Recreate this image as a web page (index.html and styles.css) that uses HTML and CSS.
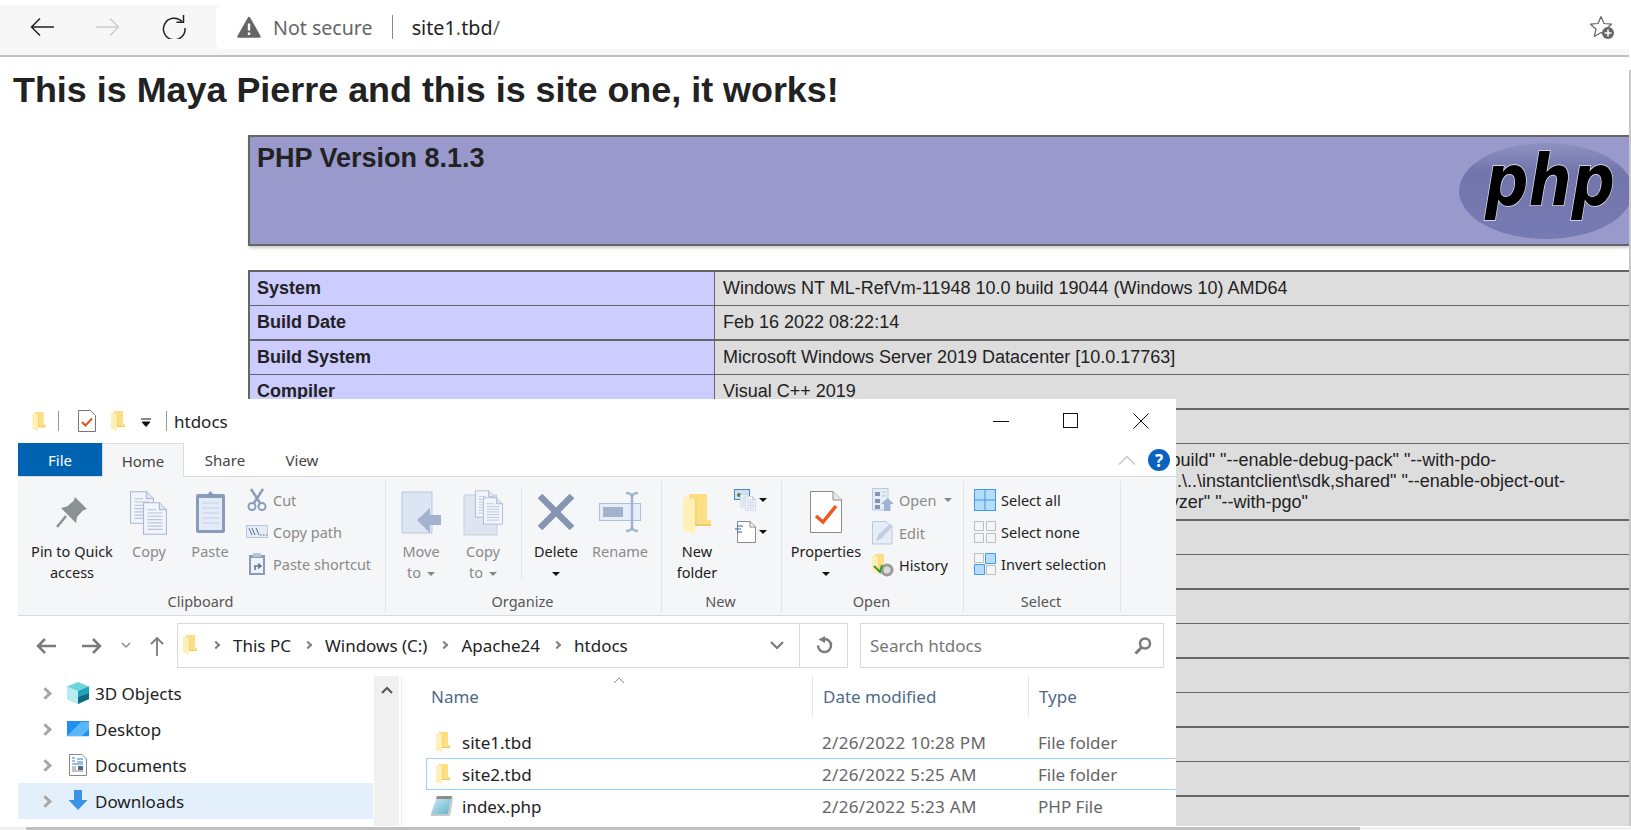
FILE: index.html
```html
<!DOCTYPE html>
<html lang="en">
<head>
    <meta charset="UTF-8">
    <title>site1.tbd</title>
    <link rel="stylesheet" href="styles.css">
</head>
<body>

<svg class="defs" width="0" height="0">
    <defs>
        <linearGradient id="noteFill" x1="0" y1="0" x2="1" y2="1">
            <stop offset="0" stop-color="#d8eef4"/>
            <stop offset="1" stop-color="#5fb0c8"/>
        </linearGradient>
    </defs>
    <symbol id="folder" viewBox="0 0 14 20">
        <path d="M3 0H12V13H14V16H3z" fill="#fcdf85"/>
        <path d="M0 1L6 3V20L0 18z" fill="#fff0b8"/>
        <path d="M6 3V16H7V3z" fill="#f7d575"/>
        <path d="M6 15H14V16H6z" fill="#f2cb62"/>
    </symbol>
    <symbol id="sheet" viewBox="0 0 22 30">
        <path d="M.5.5H15L21.500 7V29.500H.5z" fill="#f2f5fb" stroke="#a9b7d1"/>
        <path d="M15 .5V7H21.500" fill="#dfe5f0" stroke="#a9b7d1"/>
        <path d="M4 7H12M4 10H18M4 13H18M4 16H18M4 19H18M4 22H18M4 25H18" stroke="#b9c4d9"/>
    </symbol>
</svg>

<!-- browser toolbar -->
<div class="toolbar">
    <div class="nav-btns">
        <svg width="24" height="20" viewBox="0 0 24 20"><path d="M1 10H24M10 1.500L1.500 10l8.500 8.500" fill="none" stroke="#222" stroke-width="1.500"/></svg>
        <svg width="24" height="20" viewBox="0 0 24 20"><path d="M0 10H23M14 1.500L22.500 10 14 18.500" fill="none" stroke="#ccc" stroke-width="1.500"/></svg>
        <svg width="24" height="24" viewBox="0 0 24 24"><path d="M20 6.500A10.800 10.800 0 1 0 23 13" fill="none" stroke="#222" stroke-width="1.500"/><path d="M21.500 0V7.200H14.500" fill="none" stroke="#222" stroke-width="1.500"/></svg>
    </div>
    <div class="address">
        <svg class="warn" width="24" height="22" viewBox="0 0 24 22"><path d="M12 2L22.500 20.500H1.500z" fill="#666" stroke="#666" stroke-width="2.500" stroke-linejoin="round"/><path d="M12 7.500V14.500M12 16.500V19" stroke="#fff" stroke-width="2.400"/></svg>
        <span class="not-secure">Not secure</span>
        <span class="addr-sep"></span>
        <span class="url">site1<span class="url-dim">.</span>tbd<span class="url-dim">/</span></span>
        <svg class="star" width="26" height="24" viewBox="0 0 26 24"><path d="M12 1.500L15 8.500L22.500 9.200L17 14L18.700 21.500L12 17.500L5.300 21.500L7 14L1.500 9.200L9 8.500z" fill="none" stroke="#666" stroke-width="1.200" stroke-linejoin="round"/><circle cx="19" cy="18" r="6" fill="#666"/><path d="M15.500 18H22.500M19 14.500V21.500" stroke="#fff" stroke-width="1.600"/></svg>
    </div>
</div>

<h1 class="page-title">This is Maya Pierre and this is site one, it works!</h1>

<!-- phpinfo output -->
<div class="info">
    <div class="info-head">
        <h2>PHP Version 8.1.3</h2>
        <svg class="php-logo" width="176" height="98" viewBox="0 0 176 98">
            <defs>
                <linearGradient id="logoFill" x1="0" y1="0" x2="0" y2="1">
                    <stop offset="0" stop-color="#8e92c2"/>
                    <stop offset="0.3" stop-color="#7175ab"/>
                    <stop offset="1" stop-color="#777bb3"/>
                </linearGradient>
            </defs>
            <ellipse cx="88" cy="49" rx="87" ry="48" fill="url(#logoFill)"/>
            <text class="php-word" x="27" y="63" textLength="130" lengthAdjust="spacingAndGlyphs">php</text>
        </svg>
    </div>

    <table class="info-table">
        <tr><td class="e">System</td><td class="v">Windows NT ML-RefVm-11948 10.0 build 19044 (Windows 10) AMD64</td></tr>
        <tr><td class="e">Build Date</td><td class="v">Feb 16 2022 08:22:14</td></tr>
        <tr><td class="e">Build System</td><td class="v">Microsoft Windows Server 2019 Datacenter [10.0.17763]</td></tr>
        <tr><td class="e">Compiler</td><td class="v">Visual C++ 2019</td></tr>
        <tr><td class="e"></td><td class="v"></td></tr>
        <tr class="tall"><td class="e"></td><td class="v cmd">cscript /nologo /e:jscript configure.js "--enable-snapshot-build" "--enable-debug-pack" "--with-pdo-<br>oci=..\..\..\..\instantclient\sdk,shared" "--with-oci8-19=..\..\..\..\instantclient\sdk,shared" "--enable-object-out-<br>dir=..\obj\" "--enable-com-dotnet=shared" "--without-analyzer" "--with-pgo"</td></tr>
        <tr><td class="e"></td><td class="v"></td></tr>
        <tr><td class="e"></td><td class="v"></td></tr>
        <tr><td class="e"></td><td class="v"></td></tr>
        <tr><td class="e"></td><td class="v"></td></tr>
        <tr><td class="e"></td><td class="v"></td></tr>
        <tr><td class="e"></td><td class="v"></td></tr>
        <tr><td class="e"></td><td class="v"></td></tr>
        <tr><td class="e"></td><td class="v"></td></tr>
        <tr><td class="e"></td><td class="v"></td></tr>
    </table>
</div>

<!-- File Explorer window on top of the page -->
<div class="explorer">
    <div class="titlebar">
        <svg class="tb-folder" width="14" height="19"><use href="#folder"/></svg>
        <span class="tb-sep"></span>
        <svg class="tb-props" width="18" height="22" viewBox="0 0 18 22"><path d="M.5.5H12.500L17.500 5.500V21.500H.5z" fill="#fff" stroke="#777"/><path d="M4 12L7.500 15.500L14 8.500" fill="none" stroke="#e8541e" stroke-width="2"/></svg>
        <svg class="tb-folder2" width="14" height="20"><use href="#folder"/></svg>
        <svg class="tb-drop" width="10" height="10" viewBox="0 0 10 10"><path d="M0 1H10M1 4H9L5 8.500z" stroke="#111" fill="#111"/></svg>
        <span class="tb-sep tb-sep2"></span>
        <span class="win-title">htdocs</span>
        <div class="win-btns">
            <svg width="16" height="16" viewBox="0 0 16 16"><path d="M0 8.500H16" stroke="#111"/></svg>
            <svg width="16" height="16" viewBox="0 0 16 16"><rect x=".5" y=".5" width="14" height="14" fill="none" stroke="#111"/></svg>
            <svg width="16" height="16" viewBox="0 0 16 16"><path d="M.5.5L15.500 15.500M15.500.5L.5 15.500" stroke="#111"/></svg>
        </div>
    </div>

    <div class="tabs">
        <span class="tab file-tab">File</span>
        <span class="tab home-tab">Home</span>
        <span class="tab share-tab">Share</span>
        <span class="tab view-tab">View</span>
        <svg class="collapse" width="18" height="10" viewBox="0 0 18 10"><path d="M1 9.500L9 1.500L17 9.500" fill="none" stroke="#c8c8c8" stroke-width="1.500"/></svg>
        <span class="help">?</span>
    </div>

    <div class="ribbon">
        <section class="group clipboard">
            <div class="group-body">
                <div class="big pin-btn">
                    <div class="big-icon"><svg width="32" height="32" viewBox="0 0 32 32"><path d="M19 1L31 13L27 14.500L21 21L20 27L5 12L11 10.500L17.500 5z" fill="#8b9296"/><path d="M10 20L1 31" stroke="#8b9296" stroke-width="2.500"/></svg></div>
                    <span class="on">Pin to Quick<br>access</span>
                </div>
                <div class="big copy-btn">
                    <div class="big-icon"><svg width="38" height="44" viewBox="0 0 38 44"><use href="#sheet" width="24" height="33" x="0" y="0"/><use href="#sheet" width="24" height="33" x="13" y="11"/></svg></div>
                    <span>Copy</span>
                </div>
                <div class="big paste-btn">
                    <div class="big-icon"><svg width="31" height="44" viewBox="0 0 31 44"><rect x="1" y="4" width="29" height="39" rx="2" fill="#8b9cba"/><rect x="4" y="8" width="23" height="32" fill="#e3ebf7"/><path d="M7 13H24M7 18H24M7 23H24M7 28H24M7 33H24" stroke="#c5d0e3"/><path d="M10 7L15.500 1L21 7z" fill="#8b9cba"/></svg></div>
                    <span>Paste</span>
                </div>
                <div class="small-list">
                    <div class="small"><svg width="20" height="24" viewBox="0 0 20 24"><path d="M4 1L13 15M16 1L7 15" stroke="#8b9cba" stroke-width="2.500"/><circle cx="5" cy="18.500" r="3.500" fill="none" stroke="#8b9cba" stroke-width="2"/><circle cx="15" cy="18.500" r="3.500" fill="none" stroke="#8b9cba" stroke-width="2"/></svg><span>Cut</span></div>
                    <div class="small"><svg width="22" height="14" viewBox="0 0 22 14"><rect x=".5" y=".5" width="21" height="12" fill="#e3ebf7" stroke="#b9c4d9"/><path d="M3 3L6 10M6 3L9 10M10 3L13 10" stroke="#5d6e8e"/><path d="M14 10H15.500M17 10H18.500M20 10H21" stroke="#5d6e8e"/></svg><span>Copy path</span></div>
                    <div class="small"><svg width="20" height="24" viewBox="0 0 20 24"><rect x="2" y="3" width="16" height="20" fill="#8b9cba"/><rect x="4" y="6" width="12" height="15" fill="#eef2f9"/><path d="M6 1H14V5H6z" fill="#b9c4d9"/><path d="M8 18V14H13M11 11.500L14 14L11 16.500" fill="none" stroke="#5d6e8e" stroke-width="1.500"/></svg><span>Paste shortcut</span></div>
                </div>
            </div>
            <div class="group-label">Clipboard</div>
        </section>

        <section class="group organize">
            <div class="group-body">
                <div class="big move-btn">
                    <div class="big-icon"><svg width="40" height="44" viewBox="0 0 40 44"><path d="M1 1H31V42H1z" fill="#dbe5f3" stroke="#b9c8de"/><path d="M16 32L29 20V27H40V37H29V45z" transform="translate(0 -3)" fill="#a3b3cf"/></svg></div>
                    <span>Move<br>to<i class="caret dim"></i></span>
                </div>
                <div class="big copyto-btn">
                    <div class="big-icon"><svg width="41" height="46" viewBox="0 0 41 46"><path d="M1 5H34V45H1z" fill="#dee5f0" stroke="#c3cfe0"/><use href="#sheet" width="20" height="28" x="12" y="0"/><use href="#sheet" width="20" height="30" x="20" y="6"/></svg></div>
                    <span>Copy<br>to<i class="caret dim"></i></span>
                </div>
                <span class="inner-sep"></span>
                <div class="big delete-btn">
                    <div class="big-icon"><svg width="38" height="38" viewBox="0 0 38 38"><path d="M3 3L35 35M35 3L3 35" stroke="#8595b2" stroke-width="6.500"/></svg></div>
                    <span class="on">Delete<br><i class="caret dark"></i></span>
                </div>
                <div class="big rename-btn">
                    <div class="big-icon"><svg width="42" height="42" viewBox="0 0 42 42"><rect x=".5" y="11.500" width="41" height="17" fill="#e6edf8" stroke="#b0bfd8"/><rect x="4" y="15" width="20" height="10" fill="#a3b3cf"/><path d="M27 1C31 1 33 2 33 6V34C33 38 31 39 27 39M39 1C35 1 33 2 33 6M39 39C35 39 33 38 33 34" fill="none" stroke="#a3b3cf" stroke-width="2.500"/></svg></div>
                    <span>Rename</span>
                </div>
            </div>
            <div class="group-label">Organize</div>
        </section>

        <section class="group new-group">
            <div class="group-body">
                <div class="big newfolder-btn">
                    <div class="big-icon"><svg width="28" height="42"><use href="#folder"/></svg></div>
                    <span class="on">New<br>folder</span>
                </div>
                <div class="stack">
                    <div class="stack-row">
                        <svg width="22" height="22" viewBox="0 0 22 22"><rect x=".5" y=".5" width="15" height="10" fill="#cfe3f5" stroke="#4b86bd"/><circle cx="5" cy="6" r="2" fill="#6d7a45"/><use href="#sheet" width="10" height="14" x="6" y="5"/><use href="#sheet" width="11" height="15" x="11" y="7"/></svg>
                        <i class="caret dark"></i>
                    </div>
                    <div class="stack-row">
                        <svg width="22" height="22" viewBox="0 0 22 22"><path d="M3.500.5H16L21.500 6V21.500H3.500z" fill="#fff" stroke="#8c8c8c"/><path d="M16 .5V6H21.500" fill="none" stroke="#8c8c8c"/><path d="M3 5H9M1 8H7M3 11H8" stroke="#2a62a5"/></svg>
                        <i class="caret dark"></i>
                    </div>
                </div>
            </div>
            <div class="group-label">New</div>
        </section>

        <section class="group open-group">
            <div class="group-body">
                <div class="big props-btn">
                    <div class="big-icon"><svg width="32" height="42" viewBox="0 0 32 42"><path d="M.5.5H23L31.500 9V41.500H.5z" fill="#fff" stroke="#8c8c8c"/><path d="M23 .5V9H31.500" fill="#e8e8e8" stroke="#8c8c8c"/><path d="M6 25L13 31L26 15" fill="none" stroke="#ea5a1c" stroke-width="3.500"/></svg></div>
                    <span class="on">Properties<br><i class="caret dark"></i></span>
                </div>
                <div class="small-list open-list">
                    <div class="small"><svg width="22" height="24" viewBox="0 0 22 24"><path d="M.5.5H16V22H.5z" fill="#e6edf8" stroke="#b9c8de"/><path d="M3 4H8V8H3zM3 11H8V15H3zM3 17H8V21H3z" fill="#8595b2"/><path d="M10 4H14M10 8H14" stroke="#b9c8de"/><path d="M9 16L15.500 10L22 16H18.500V23H12V16z" fill="#a3b3cf"/></svg><span>Open</span><i class="caret dim"></i></div>
                    <div class="small"><svg width="22" height="24" viewBox="0 0 22 24"><path d="M.5.5H14L20 6V23H.5z" fill="#e6edf8" stroke="#b9c8de"/><path d="M4 20L6 14L18 3L21 5L9 18z" fill="#c3cfe0"/></svg><span>Edit</span></div>
                    <div class="small on"><svg width="22" height="24" viewBox="0 0 22 24"><use href="#folder" width="14" height="22"/><circle cx="15" cy="17" r="6.500" fill="#9a9a9a"/><circle cx="15" cy="17" r="3.500" fill="#dcdcdc"/><path d="M2 13L8 19L10 12" fill="none" stroke="#3b9a35" stroke-width="2"/></svg><span>History</span></div>
                </div>
            </div>
            <div class="group-label">Open</div>
        </section>

        <section class="group select-group">
            <div class="group-body">
                <div class="small-list select-list">
                    <div class="small on"><svg width="22" height="22" viewBox="0 0 22 22"><rect x=".5" y=".5" width="21" height="21" fill="#b4dcfb" stroke="#3d9be9"/><path d="M11 0V22M0 11H22" stroke="#3d9be9"/></svg><span>Select all</span></div>
                    <div class="small on"><svg width="22" height="22" viewBox="0 0 22 22"><path d="M.5.5H9.500V9.500H.5zM12.500.5H21.500V9.500H12.500zM.5 12.500H9.500V21.500H.5zM12.500 12.500H21.500V21.500H12.500z" fill="none" stroke="#bdbdbd"/></svg><span>Select none</span></div>
                    <div class="small on"><svg width="22" height="22" viewBox="0 0 22 22"><path d="M.5.5H9.500V9.500H.5zM12.500 12.500H21.500V21.500H12.500z" fill="none" stroke="#bdbdbd"/><path d="M11.500.5H21.500V10.500H11.500zM.5 11.500H10.500V21.500H.5z" fill="#b4dcfb" stroke="#3d9be9"/></svg><span>Invert selection</span></div>
                </div>
            </div>
            <div class="group-label">Select</div>
        </section>
    </div>

    <div class="addr-row">
        <svg class="arrow" width="20" height="16" viewBox="0 0 20 16"><path d="M20 8H2M9 1L2 8L9 15" fill="none" stroke="#7b7b7b" stroke-width="2.500"/></svg>
        <svg class="arrow arrow-fwd" width="20" height="16" viewBox="0 0 20 16"><path d="M0 8H18M11 1L18 8L11 15" fill="none" stroke="#7b7b7b" stroke-width="2.500"/></svg>
        <svg class="arrow-down" width="10" height="7" viewBox="0 0 10 7"><path d="M1 1L5 5L9 1" fill="none" stroke="#8c8c8c" stroke-width="1.500"/></svg>
        <svg class="arrow-up" width="14" height="20" viewBox="0 0 14 20"><path d="M7 20V2M1 8L7 2L13 8" fill="none" stroke="#7b7b7b" stroke-width="1.800"/></svg>
        <div class="path-box">
            <svg class="path-folder" width="14" height="20"><use href="#folder"/></svg>
            <i class="crumb-sep"></i><span>This PC</span>
            <i class="crumb-sep"></i><span>Windows (C:)</span>
            <i class="crumb-sep"></i><span>Apache24</span>
            <i class="crumb-sep"></i><span>htdocs</span>
            <svg class="path-drop" width="14" height="9" viewBox="0 0 14 9"><path d="M1 1L7 7L13 1" fill="none" stroke="#7b7b7b" stroke-width="2.200"/></svg>
            <div class="refresh"><svg width="18" height="18" viewBox="0 0 18 18"><path d="M9.500 3A6.500 6.500 0 1 1 3 9.500" fill="none" stroke="#7b7b7b" stroke-width="2.500"/><path d="M3.500 3.500L10 0V7z" fill="#7b7b7b"/></svg></div>
        </div>
        <div class="search-box">
            <span>Search htdocs</span>
            <svg width="18" height="18" viewBox="0 0 18 18"><circle cx="11" cy="6.500" r="5" fill="none" stroke="#7b7b7b" stroke-width="2.500"/><path d="M7.500 10.500L1.500 16.500" stroke="#7b7b7b" stroke-width="3"/></svg>
        </div>
    </div>

    <div class="panes">
        <div class="nav-pane">
            <div class="tree">
                <div class="tree-row"><i class="tree-arrow"></i><svg width="22" height="22" viewBox="0 0 22 22"><path d="M11 0L22 4.500V17L11 22L0 17V4.500z" fill="#6fd3dc"/><path d="M0 4.500L11 9V22L0 17z" fill="#b8edf0"/><path d="M11 9L22 4.500V11L11 15z" fill="#1fa3b5"/><path d="M11 15L22 11V17L11 22z" fill="#0f6b80"/></svg><span>3D Objects</span></div>
                <div class="tree-row"><i class="tree-arrow"></i><svg width="22" height="16" viewBox="0 0 22 16"><rect width="22" height="16" fill="#1e90f0"/><path d="M0 15L14 1H22V8L15 15z" fill="#5cb6fa"/><rect y="15" width="22" height="1" fill="#cfe6fa"/></svg><span>Desktop</span></div>
                <div class="tree-row"><i class="tree-arrow"></i><svg width="22" height="22" viewBox="0 0 22 22"><path d="M2.500.5H15L19.500 5V21.500H2.500z" fill="#fff" stroke="#888"/><path d="M5 4H8M5 7H8M10 5H16M10 8H16M5 10H16" stroke="#2f7fd0"/><path d="M5 13H9M5 15H9M5 17H16" stroke="#888"/><rect x="11" y="12" width="5" height="4" fill="#4f6a86"/></svg><span>Documents</span></div>
                <div class="tree-row selected"><i class="tree-arrow"></i><svg width="22" height="22" viewBox="0 0 22 22"><path d="M7 0H15V10H20.500L11 20L1.500 10H7z" fill="#3a93e6"/></svg><span>Downloads</span></div>
            </div>
            <div class="pane-scroll"><svg width="12" height="8" viewBox="0 0 12 8"><path d="M1 7L6 2L11 7" fill="none" stroke="#555" stroke-width="2"/></svg></div>
        </div>

        <div class="file-pane">
            <svg class="sort-caret" width="12" height="7" viewBox="0 0 12 7"><path d="M1 6L6 1L11 6" fill="none" stroke="#8c8c8c"/></svg>
            <div class="file-head">
                <span class="col-name">Name</span>
                <span class="col-date">Date modified</span>
                <span class="col-type">Type</span>
            </div>
            <div class="file-row">
                <span class="col-name"><svg width="14" height="20"><use href="#folder"/></svg>site1.tbd</span>
                <span class="col-date">2/26/2022 10:28 PM</span>
                <span class="col-type">File folder</span>
            </div>
            <div class="file-row current">
                <span class="col-name"><svg width="14" height="20"><use href="#folder"/></svg>site2.tbd</span>
                <span class="col-date">2/26/2022 5:25 AM</span>
                <span class="col-type">File folder</span>
            </div>
            <div class="file-row">
                <span class="col-name"><svg class="php-file" width="23" height="22" viewBox="0 0 23 22"><path d="M7 1H22L18 19H1z" fill="url(#noteFill)"/><path d="M7 1H22L21.300 4H6z" fill="#8c8c8c"/><path d="M18 19L22 1L23 4L20 21H1V19z" fill="#c9c9c9"/></svg>index.php</span>
                <span class="col-date">2/26/2022 5:23 AM</span>
                <span class="col-type">PHP File</span>
            </div>
        </div>
    </div>
</div>

<!-- page scrollbars, squeezed by the screenshot -->
<div class="hscroll"><div class="hscroll-thumb"></div></div>
<div class="vscroll"></div>

</body>
</html>
```

FILE: styles.css
```css
* {
    box-sizing: border-box;
}

html, body {
    height: 100%;
}

body {
    margin: 0;
    width: 1631px;
    height: 830px;
    overflow: hidden;
    position: relative;
    background-color: white;
    font-family: "Liberation Sans", Arial, sans-serif;
    color: #222;
}

.defs {
    position: absolute;
}

/* browser toolbar */
.toolbar {
    height: 57px;
    padding-top: 5px;
    margin-right: 2px;
    display: flex;
    background-color: #f7f7f7;
    border-bottom: 2px solid #c0c0c0;
    box-shadow: inset 0 5px 0 white;
}

.nav-btns {
    width: 216px;
    flex-shrink: 0;
    display: flex;
    align-items: center;
    gap: 42px;
    padding: 0 0 7px 30px;
}

.address {
    flex: 1;
    height: 44px;
    display: flex;
    align-items: center;
    padding-left: 21px;
    background-color: white;
    border-bottom-left-radius: 6px;
    border-top-left-radius: 6px;
    font-family: "Noto Sans", sans-serif;
    font-size: 19.800px;
}

.not-secure {
    margin-left: 12px;
    color: #666;
    font-size: 19.600px;
}

.addr-sep {
    width: 1px;
    height: 24px;
    margin: 0 19px;
    background-color: #888;
}

.url {
    color: #222;
}

.url-dim {
    color: #666;
}

.star {
    margin-left: auto;
    margin-right: 14px;
}

.page-title {
    margin: 11px 0 0 13px;
    font-size: 35.900px;
    line-height: 44px;
    font-weight: bold;
    color: #222;
}

/* phpinfo */
.info {
    width: 1381px;
    margin: 23px 0 0 248px;
}

.info-head {
    height: 111px;
    padding: 5px 7px;
    display: flex;
    justify-content: space-between;
    overflow: hidden;
    background-color: #9999cc;
    border: 2px solid #666;
    border-right: 0;
    box-shadow: 1px 2px 3px #ccc;
}

.info-head h2 {
    margin: 0;
    font-size: 27px;
    line-height: 32px;
    font-weight: bold;
}

.php-logo {
    flex-shrink: 0;
    margin: 0 -12px 0 0;
}

.php-word {
    font-family: "DejaVu Sans", sans-serif;
    font-size: 72px;
    font-weight: bold;
    font-style: italic;
    fill: #000;
    stroke: #e8e8f2;
    stroke-width: 1.500;
    paint-order: stroke;
}

.info-table {
    width: 1381px;
    margin-top: 24px;
    table-layout: fixed;
    border-collapse: separate;
    border-spacing: 0;
    border-top: 2px solid #666;
    font-size: 18px;
}

.info-table td {
    height: 34px;
    padding: 0 7px;
    border-bottom: 1px solid #666;
    vertical-align: middle;
}

.info-table tr:nth-child(even) td {
    height: 35px;
    border-bottom-width: 2px;
}

.info-table tr.tall td {
    height: 77px;
}

.e {
    width: 466px;
    font-weight: bold;
    background-color: #ccccff;
    border-left: 2px solid #666;
}

.info-table .v {
    padding-left: 8px;
    background-color: #dddddd;
    border-left: 1px solid #666;
}

.cmd {
    line-height: 21px;
    white-space: nowrap;
}

/* explorer window */
.explorer {
    position: absolute;
    left: 18px;
    top: 399px;
    width: 1158px;
    height: 428px;
    display: flex;
    flex-direction: column;
    background-color: white;
    font-family: "Noto Sans", sans-serif;
    color: #222;
}

.titlebar {
    height: 44px;
    flex-shrink: 0;
    display: flex;
    align-items: center;
    padding-left: 14px;
}

.tb-sep {
    width: 1px;
    height: 20px;
    margin-left: 12px;
    background-color: #999;
}

.tb-props {
    margin-left: 19px;
}

.tb-folder2 {
    margin-left: 15px;
}

.tb-drop {
    margin: 4px 0 0 16px;
}

.tb-sep2 {
    margin-left: 15px;
}

.win-title {
    margin-left: 7px;
    font-size: 17px;
}

.win-btns {
    margin-left: auto;
    margin-right: 27px;
    display: flex;
    gap: 54px;
}

.tabs {
    height: 34px;
    flex-shrink: 0;
    display: flex;
    align-items: stretch;
    position: relative;
    border-bottom: 1px solid #dadbdc;
    font-size: 15px;
    color: #444;
}

.tab {
    display: flex;
    align-items: center;
    justify-content: center;
}

.file-tab {
    width: 84px;
    background-color: #0063b1;
    color: white;
}

.home-tab {
    width: 82px;
    height: 34px;
    background-color: #f5f6f7;
    border: 1px solid #dadbdc;
    border-bottom: 0;
}

.share-tab {
    width: 70px;
    margin-left: 6px;
}

.view-tab {
    width: 44px;
    margin-left: 20px;
}

.collapse {
    margin: 12px 0 0 auto;
}

.help {
    width: 22px;
    height: 22px;
    margin: 6px 6px 0 12px;
    border-radius: 50%;
    display: flex;
    align-items: center;
    justify-content: center;
    background-color: #0a63c0;
    color: white;
    font-size: 17px;
    font-weight: bold;
}

.ribbon {
    height: 139px;
    flex-shrink: 0;
    display: flex;
    background-color: #f5f6f7;
    border-bottom: 1px solid #dadbdc;
    font-size: 14.500px;
    color: #8a8a8a;
}

.group {
    display: flex;
    flex-direction: column;
    position: relative;
}

.group::after {
    content: "";
    position: absolute;
    right: 0;
    top: 4px;
    bottom: 3px;
    width: 1px;
    background-color: #e1e3e6;
}

.clipboard {
    width: 368px;
}

.organize {
    width: 276px;
}

.new-group {
    width: 120px;
}

.open-group {
    width: 182px;
}

.select-group {
    width: 157px;
}

.group-body {
    flex: 1;
    display: flex;
}

.group-label {
    height: 25px;
    padding-right: 3px;
    text-align: center;
    line-height: 22px;
    color: #555;
}

.big {
    padding-top: 11px;
    display: flex;
    flex-direction: column;
    align-items: center;
    text-align: center;
    line-height: 21px;
}

.big-icon {
    height: 53px;
    display: flex;
    align-items: flex-start;
    justify-content: center;
}

.on {
    color: #222;
}

.pin-btn { width: 108px; }
.copy-btn { width: 46px; }
.paste-btn { width: 76px; }
.move-btn { width: 70px; }
.copyto-btn { width: 54px; }
.delete-btn { width: 68px; }
.rename-btn { width: 60px; }
.newfolder-btn { width: 70px; }
.props-btn { width: 88px; }

.pin-btn .big-icon { padding-top: 8px; }
.copy-btn .big-icon { padding-top: 3px; }
.paste-btn .big-icon { padding-top: 2px; }
.move-btn .big-icon { padding-top: 3px; }
.copyto-btn .big-icon { padding-top: 2px; }
.delete-btn .big-icon { padding-top: 5px; }
.rename-btn .big-icon { padding-top: 4px; }
.newfolder-btn .big-icon { padding-top: 5px; }
.props-btn .big-icon { padding-top: 3px; }

.inner-sep {
    width: 1px;
    height: 91px;
    margin: 11px 0 0 11px;
    background-color: #e1e3e6;
}

.caret {
    display: inline-block;
    width: 0;
    height: 0;
    margin-left: 6px;
    vertical-align: middle;
    border-left: 4px solid transparent;
    border-right: 4px solid transparent;
    border-top: 4px solid #333;
}

.caret.dim {
    border-top-color: #888;
}

.caret.dark {
    margin-left: 0;
    border-top-color: #111;
}

.small-list {
    padding-top: 7px;
    margin-left: -2px;
}

.small {
    height: 32px;
    display: flex;
    align-items: center;
    white-space: nowrap;
}

.small svg {
    width: 22px;
    flex-shrink: 0;
    margin-right: 5px;
}

.small .caret {
    margin-left: 8px;
}

.open-list {
    margin-left: 2px;
}

.open-list .small {
    height: 32.500px;
}

.select-list {
    margin-left: 10px;
}

.stack {
    padding-top: 12px;
    display: flex;
    flex-direction: column;
    gap: 10px;
}

.stack-row {
    display: flex;
    align-items: center;
    gap: 3px;
    margin-left: 2px;
}

/* address row */
.addr-row {
    height: 45px;
    flex-shrink: 0;
    margin-top: 7px;
    display: flex;
    align-items: center;
    padding-left: 18px;
    font-size: 17px;
}

.arrow-fwd {
    margin-left: 26px;
}

.arrow-down {
    margin-left: 19px;
}

.arrow-up {
    margin-left: 19px;
    margin-right: 13px;
}

.path-box {
    width: 671px;
    height: 45px;
    flex-shrink: 0;
    display: flex;
    align-items: center;
    padding: 0 0 1px 5px;
    background-color: white;
    border: 1px solid #d9d9d9;
}

.crumb-sep {
    width: 6px;
    height: 6px;
    margin: 0 14px;
    transform: rotate(45deg);
    border-top: 2px solid #808080;
    border-right: 2px solid #808080;
}

.path-folder + .crumb-sep {
    margin-left: 16px;
}

.path-drop {
    margin-left: auto;
    margin-right: 15px;
}

.refresh {
    width: 48px;
    height: 43px;
    display: flex;
    align-items: center;
    justify-content: center;
    border-left: 1px solid #d9d9d9;
}

.search-box {
    width: 304px;
    height: 45px;
    margin-left: 12px;
    flex-shrink: 0;
    display: flex;
    align-items: center;
    justify-content: space-between;
    padding: 0 11px 0 9px;
    border: 1px solid #d9d9d9;
    color: #777;
}

/* panes */
.panes {
    flex: 1;
    margin-top: 8px;
    display: flex;
    min-height: 0;
}

.nav-pane {
    width: 384px;
    flex-shrink: 0;
    display: flex;
    border-right: 1px solid #ececec;
    padding-right: 2px;
}

.tree {
    width: 355px;
    margin-top: -1px;
}

.tree-row {
    height: 36px;
    display: flex;
    align-items: center;
    padding-left: 23px;
    font-size: 17px;
}

.tree-row svg {
    width: 24px;
    margin: 0 5px 0 16px;
}

.tree-row.selected {
    background-color: #e3f0fb;
}

.tree-arrow {
    width: 9px;
    height: 9px;
    transform: rotate(45deg);
    border-top: 3px solid #a6a6a6;
    border-right: 3px solid #a6a6a6;
}

.pane-scroll {
    width: 25px;
    margin-left: 1px;
    padding-top: 10px;
    display: flex;
    justify-content: center;
    background-color: #f0f0f0;
}

.file-pane {
    flex: 1;
    position: relative;
    font-size: 17px;
}

.sort-caret {
    position: absolute;
    left: 211px;
    top: 1px;
}

.file-head,
.file-row {
    display: grid;
    grid-template-columns: 385px 216px 1fr;
    align-items: center;
    padding-left: 25px;
}

.file-head {
    height: 41px;
    margin-bottom: 9px;
    color: #4f6a86;
}

.file-head .col-name {
    padding-left: 4px;
}

.file-head .col-date,
.file-head .col-type {
    align-self: stretch;
    display: flex;
    align-items: center;
    padding-left: 10px;
    border-left: 1px solid #e5e5e5;
}

.file-row {
    height: 32px;
}

.file-row .col-name {
    display: flex;
    align-items: center;
    gap: 12px;
    padding-left: 9px;
}

.file-row .col-date,
.file-row .col-type {
    padding-left: 10px;
    color: #666;
}

.file-row .col-date {
    letter-spacing: 0.300px;
}

.file-row.current {
    margin-left: 24px;
    padding-left: 0;
    border: 1px solid #99d1ff;
    border-right: 0;
}

.file-row .php-file {
    margin: 0 -3px 0 -6px;
}

/* page scrollbars */
.hscroll {
    position: absolute;
    left: 0;
    right: 0;
    bottom: 0;
    height: 4px;
    background-color: #f1f1f1;
    border-top: 1px solid white;
}

.hscroll-thumb {
    width: 1334px;
    height: 3px;
    margin-left: 26px;
    background-color: #c0c0c0;
}

.vscroll {
    position: absolute;
    right: 0;
    top: 70px;
    bottom: 4px;
    width: 2px;
    background-color: #c8c8c8;
}
```
